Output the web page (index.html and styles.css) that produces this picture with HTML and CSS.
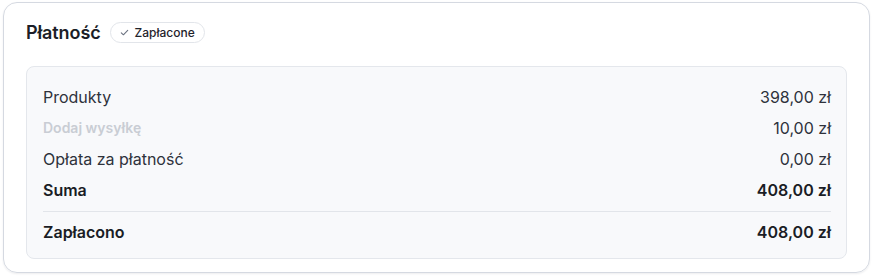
FILE: index.html
```html
<!DOCTYPE html>
<html lang="pl">
<head>
<meta charset="utf-8">
<link rel="stylesheet" href="styles.css">
</head>
<body>
<section class="card">
  <header class="card-head">
    <h2 class="title">Płatność</h2>
    <span class="badge">
      <svg class="badge-icon" viewBox="0 0 12 12" width="11" height="11"><path d="M2.5 6.3 L4.8 8.5 L9.5 3.6" fill="none" stroke="currentColor" stroke-width="1.2" stroke-linecap="round" stroke-linejoin="round"/></svg>
      Zapłacone
    </span>
  </header>
  <div class="summary">
    <div class="row"><span>Produkty</span><span>398,00 zł</span></div>
    <div class="row"><span class="muted">Dodaj wysyłkę</span><span>10,00 zł</span></div>
    <div class="row"><span>Opłata za płatność</span><span>0,00 zł</span></div>
    <div class="row strong"><span>Suma</span><span>408,00 zł</span></div>
    <div class="row strong paid"><span>Zapłacono</span><span>408,00 zł</span></div>
  </div>
</section>
</body>
</html>
```
FILE: styles.css
```css
* { box-sizing: border-box; }
html, body { margin: 0; background: #ffffff; }
body {
  padding: 2px 5px 5px 3px;
  font-family: Inter, "Noto Sans", sans-serif;
  color: #2b2f38;
}
.card {
  height: 271px;
  border: 1px solid #d5d9e1;
  border-radius: 14px;
  box-shadow: 0 1px 2px rgba(20, 30, 50, 0.08);
  padding: 0 22px 13px 22px;
  display: flex;
  flex-direction: column;
}
.card-head {
  display: flex;
  align-items: center;
  gap: 9px;
  height: 63px;
  padding-bottom: 4px;
}
.title {
  margin: 0;
  font-size: 18px;
  font-weight: 600;
  color: #1b1e27;
  letter-spacing: -0.1px;
}
.badge {
  display: inline-flex;
  align-items: center;
  gap: 5px;
  height: 21px;
  padding: 0 9px 0 8px;
  border: 1px solid #e2e5ea;
  border-radius: 999px;
  font-size: 12px;
  font-weight: 500;
  color: #1f232c;
}
.badge-icon { color: #6b7280; }
.summary {
  flex: 1;
  background: #f8f9fb;
  border: 1px solid #e4e7ec;
  border-radius: 8px;
  padding: 14px 15px 10px 16px;
}
.row {
  display: flex;
  justify-content: space-between;
  align-items: center;
  height: 31px;
  font-size: 16px;
  color: #2e323b;
}
.row .muted {
  color: #c9cdd4;
  font-size: 14px;
  font-weight: 600;
}
.row.strong {
  font-weight: 600;
  color: #1a1d25;
}
.row.paid {
  margin-top: 6px;
  padding-top: 4px;
  height: 37px;
  border-top: 1px solid #e2e5ea;
}
```
